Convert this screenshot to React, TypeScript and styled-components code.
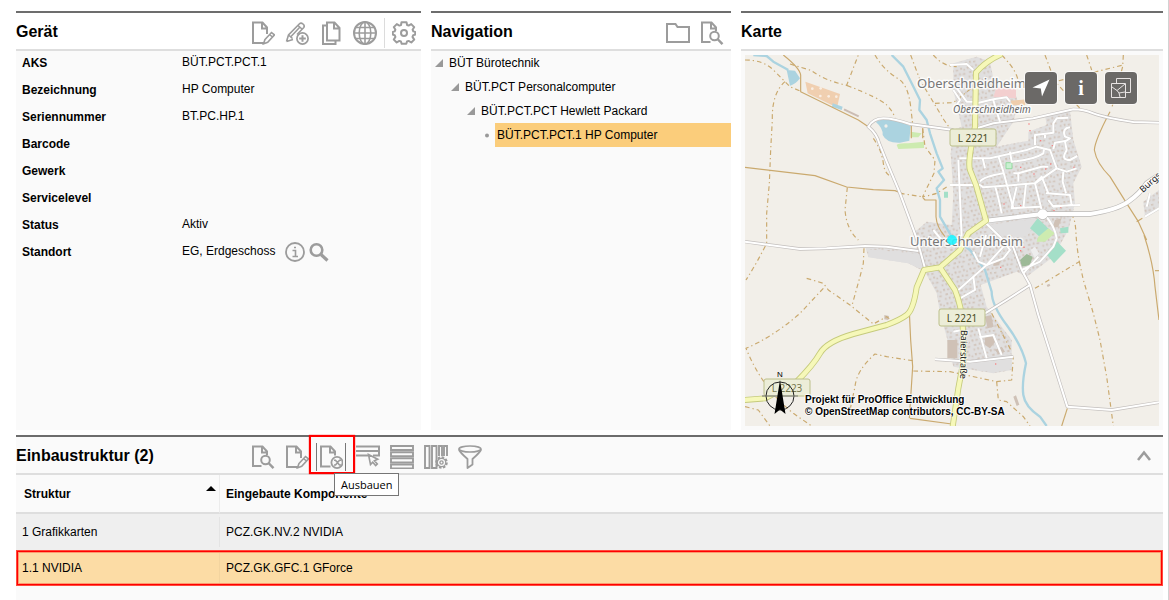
import React from "react";
import styled, { createGlobalStyle, css } from "styled-components";

const GlobalStyle = createGlobalStyle`
  *, *::before, *::after { box-sizing: border-box; }
  body {
    margin: 0;
    background: #fff;
    color: #000;
    font: 12px/24px "Liberation Sans", Arial, sans-serif;
  }
  h2, p, ul, dl, dd { margin: 0; padding: 0; }
  ul { list-style: none; }
`;

const Page = styled.main`
  display: flex;
  flex-direction: column;
  gap: 5px;
  min-height: 100vh;
  padding: 11px 5px 0 16px;
  border-right: 1px solid #d2d2d2;
`;

const TopRow = styled.div`
  display: grid;
  grid-template-columns: minmax(0, 405fr) minmax(0, 300fr) minmax(0, 422fr);
  gap: 10px;
`;

const Panel = styled.section<{ $grow?: boolean }>`
  display: flex;
  flex-direction: column;
  border-top: 2px solid #6d6d6d;
  background: #fafafa;
  ${(p) => p.$grow && "flex: 1;"}
`;

const PanelHeader = styled.header<{ $tinted?: boolean; $padRight?: number }>`
  display: flex;
  align-items: center;
  height: 38px;
  padding-top: 2px;
  padding-right: ${(p) => p.$padRight ?? 0}px;
  border-bottom: 2px solid #dedede;
  background: ${(p) => (p.$tinted ? "#fafafa" : "#fff")};
`;

const Title = styled.h2<{ $wide?: boolean }>`
  font-size: 16px;
  line-height: 34px;
  ${(p) => (p.$wide ? "flex: 0 0 235px;" : "flex: 1;")}
`;

const Toolbar = styled.div`
  display: flex;
  align-items: center;
  gap: 10px;
  padding-top: 2px;
`;

const IconButton = styled.button`
  display: block;
  position: relative;
  flex: none;
  padding: 0;
  border: 0;
  background: none;
  color: #9c9c9c;
  cursor: pointer;
  svg { display: block; }
`;

const HoveredButton = styled(IconButton)`
  margin-left: -3px;
  padding: 2px;
  border: solid #777;
  border-width: 0 1px;
`;

const Marker = styled.span`
  position: absolute;
  top: -8px;
  left: -8px;
  width: 46px;
  height: 39px;
  border: 2px solid #f00;
  box-shadow: 0 0 1px #f00;
`;

const Tooltip = styled.span`
  position: absolute;
  z-index: 2;
  top: 30px;
  left: 17px;
  padding: 0 6px;
  border: 1px solid #767676;
  background: #fff;
  color: #000;
  font: 11px/21px "Open Sans", "Noto Sans", sans-serif;
`;

const Divider = styled.span`
  width: 1px;
  height: 30px;
  margin: 0 -3px;
  background: #dcdcdc;
`;

const Spacer = styled.span`
  flex: 1;
`;

const Fields = styled.dl`
  display: flex;
  flex-direction: column;
  gap: 3px;
  padding-left: 6px;
`;

const Field = styled.div`
  display: grid;
  grid-template-columns: 160px 1fr;
  height: 24px;
  dt { font-weight: bold; }
  dd { display: flex; gap: 10px; line-height: 22px; }
`;

const Inline = styled.span`
  display: flex;
  gap: 4px;
`;

const TreeItem = styled.li<{ $level: number }>`
  display: flex;
  align-items: center;
  padding-left: ${(p) => 3 + p.$level * 16}px;
`;

const TreeLabel = styled.span<{ $selected?: boolean }>`
  flex: 1;
  padding-left: 2px;
  ${(p) => p.$selected && "background: #fbcd7b;"}
`;

const MapFrame = styled.div`
  position: relative;
  margin: 4px;
  height: 371px;
  overflow: hidden;
  > svg { display: block; width: 100%; height: 100%; }
`;

const MapTools = styled.div`
  position: absolute;
  top: 17px;
  right: 22px;
  display: flex;
  gap: 8px;
`;

const MapButton = styled.button`
  display: grid;
  place-items: center;
  width: 32px;
  height: 32px;
  padding: 0;
  border: 0;
  border-radius: 4px;
  background: #6b6967;
  box-shadow: 0 0 0 1px rgba(255, 255, 255, 0.7);
  color: #fff;
  font: bold 20px/20px "Liberation Serif", serif;
  cursor: pointer;
`;

const Credits = styled.p`
  position: absolute;
  left: 60px;
  bottom: 8px;
  font: bold 10px/12px "Liberation Sans", Arial, sans-serif;
  white-space: nowrap;
  text-shadow: 1px 0 1px #fff, -1px 0 1px #fff, 0 1px 1px #fff, 0 -1px 1px #fff;
`;

const Compass = styled.svg`
  && {
    position: absolute;
    left: 17px;
    bottom: 6px;
    width: 36px;
    height: 52px;
  }
`;

const Table = styled.table`
  width: 100%;
  border-collapse: separate;
  border-spacing: 0;
  table-layout: fixed;
  text-align: left;
  line-height: 16px;
`;

const HeadCell = styled.th<{ $first?: boolean }>`
  height: 39px;
  padding: 0 3px 0 ${(p) => (p.$first ? 8 : 6)}px;
  border-bottom: 2px solid #dedede;
  ${(p) => p.$first && "width: 204px; border-right: 1px solid #ececec;"}
`;

const SortButton = styled.button`
  display: flex;
  justify-content: space-between;
  width: 100%;
  padding: 0;
  border: 0;
  background: none;
  color: #000;
  font: inherit;
  text-align: left;
`;

const Row = styled.tr<{ $selected?: boolean }>`
  height: 36px;
  background: ${(p) => (p.$selected ? "#fcdca5" : "#efefef")};
  ${(p) =>
    p.$selected &&
    css`
      box-shadow: inset 0 0 0 1px #ff4a3c, inset 0 0 0 2px #f00, inset 0 0 0 3px #fd9a70;
    `}
  td { padding: 0 6px; }
  td:first-child {
    background: linear-gradient(${(p) => (p.$selected ? "#f3d49f, #f3d49f" : "#e4e4e4, #e4e4e4")}) right center / 1px 30px no-repeat;
  }
`;

function Icon({ children, size = 24 }: { children: React.ReactNode; size?: number }) {
  return (
    <svg width={size} height={size} viewBox={`0 0 ${size} ${size}`} fill="none" stroke="currentColor" strokeWidth="2" aria-hidden="true">
      {children}
    </svg>
  );
}

const DocEdit = () => (
  <Icon>
    <path d="M13 22H2V1.500h9.500L16 6.500V13M11 2v5.500h5" />
    <path d="M14 18.500l6.500-7 3 2.300-6.800 7.400-4.200 1.600zM18.500 13.500l3 2.500" strokeWidth="1.600" />
  </Icon>
);
const PencilPlus = () => (
  <Icon>
    <path d="M1.500 20.500l2-6.500L14.500 2.800q1.500-1.500 3.500.2t.8 3.500L12 13.500M1.500 20.500L8 18.500M3.500 14l4 3.500M13 4.500l4.500 4M6 15.500L15 6" strokeWidth="1.600" />
    <circle cx="17.500" cy="17.500" r="5.600" strokeWidth="1.700" />
    <path d="M17.500 14.200v6.600M14.200 17.500h6.600" />
  </Icon>
);
const Copy = () => (
  <Icon>
    <path d="M8 1.500h7.500L20.500 7v12.500H8zM15 2v5.500h5" />
    <path d="M7.500 4.500H4V23h12.500v-3" />
  </Icon>
);
const Globe = () => (
  <Icon>
    <circle cx="12" cy="12" r="11" />
    <ellipse cx="12" cy="12" rx="5.800" ry="11" strokeWidth="1.600" />
    <path d="M12 1v22M1 12h22M3 6.500h18M3 17.500h18" strokeWidth="1.600" />
  </Icon>
);
const Gear = () => (
  <Icon>
    <circle cx="12" cy="12" r="3" />
    <path
      strokeLinejoin="round"
      d="M9.500 1.200h5l.6 2.800 1.500.6 2.600-1.500 3 3-1.600 2.600.7 1.700 1.900.5v2.700l-2 .6-.7 1.700 1.700 2.700-2.900 2.900-2.700-1.600-1.600.6-.7 2.300H9.700l-.8-2.300-1.600-.6-2.600 1.600-2.900-2.900 1.600-2.700-.7-1.700-1.900-.6v-2.700l1.900-.5.7-1.700L1.800 6.100l3-3 2.600 1.500L9 4z"
    />
  </Icon>
);
const Folder = () => (
  <Icon>
    <path d="M1 21V3h8.500l2 3H23v15z" />
  </Icon>
);
const DocSearch = () => (
  <Icon>
    <path d="M10.500 21H2V1.500h9.500L16 6.500V10M11 2v5.500h5" />
    <circle cx="14.500" cy="15" r="4.300" />
    <path d="M17.500 18l5 5.200" strokeWidth="2.400" />
  </Icon>
);
const DocRemove = () => (
  <Icon>
    <path d="M11.500 21.500H2V1.500h9.500L16 6.500V10.500M11 2v5.500h5" />
    <circle cx="18" cy="17.500" r="5.600" strokeWidth="1.800" />
    <path d="M15 15.200h1.500L20.500 20H22M15 20h1.500l4-4.800H22" strokeWidth="1.600" />
  </Icon>
);
const RowsCursor = () => (
  <Icon>
    <path d="M0 1.500h23V6H0M0 10.500h12M17 10.500h6V6" />
    <path d="M12.500 9.500l2 10 2.200-2.400 3 3.400 1.600-1.500-2.900-3.300 3.300-1.500z" strokeWidth="1.600" />
  </Icon>
);
const Rows = () => (
  <Icon>
    <path d="M1 1h22v4H1zM1 7.200h22v4H1zM1 13.400h22v4H1zM1 19.500h22v4H1z" strokeWidth="1.900" />
  </Icon>
);
const ColumnsGear = () => (
  <Icon>
    <path d="M1 1h4.500v22H1zM8 1h4.500v22H8zM15 11V1h3v10M20 11V1h3v10" strokeWidth="1.900" />
    <circle cx="17.500" cy="17.500" r="5.200" strokeDasharray="2.500 1.500" strokeWidth="2.200" />
    <circle cx="17.500" cy="17.500" r="4.200" strokeWidth="1.200" />
    <circle cx="17.500" cy="17.500" r="1.600" strokeWidth="1.400" />
  </Icon>
);
const Funnel = () => (
  <Icon>
    <ellipse cx="12" cy="4" rx="11" ry="3" strokeWidth="1.700" />
    <path d="M1 4.500q.5 2.500 8.500 9.500v9l5-3.500V14Q22.500 7 23 4.500" strokeWidth="1.800" strokeLinejoin="round" />
  </Icon>
);
const Info = () => (
  <Icon size={20}>
    <circle cx="10" cy="10" r="9" strokeWidth="1.800" />
    <path d="M7.500 8.500h3v6M7.500 14.500h5.500M9 5.500h2" strokeWidth="1.600" />
  </Icon>
);
const Search = () => (
  <Icon size={20}>
    <circle cx="7.500" cy="8" r="5.800" strokeWidth="2.600" />
    <path d="M12 12.500l6.500 6" strokeWidth="3.200" />
  </Icon>
);

const fields: [string, string][] = [
  ["AKS", "BÜT.PCT.PCT.1"],
  ["Bezeichnung", "HP Computer"],
  ["Seriennummer", "BT.PC.HP.1"],
  ["Barcode", ""],
  ["Gewerk", ""],
  ["Servicelevel", ""],
  ["Status", "Aktiv"],
  ["Standort", "EG, Erdgeschoss"],
];

const tree = ["BÜT Bürotechnik", "BÜT.PCT Personalcomputer", "BÜT.PCT.PCT Hewlett Packard", "BÜT.PCT.PCT.1 HP Computer"];

const structure = [
  ["1 Grafikkarten", "PCZ.GK.NV.2 NVIDIA"],
  ["1.1 NVIDIA", "PCZ.GK.GFC.1 GForce"],
];

const tracksDashed = [
  "M15 30Q70 30 100 60T150 110L185 125",
  "M135 95Q95 130 97 210L92 300 88 400 80 490 80 580Q50 640 18 690",
  "M150 42L215 62Q250 90 320 106L355 15",
  "M320 106Q420 145 440 165T465 205",
  "M405 15Q430 60 480 90Q505 110 512 170T518 225",
  "M512 15L540 90 585 165 612 210 640 250",
  "M585 160L640 158 700 110",
  "M580 15Q610 50 650 50",
  "M548 235L555 290 585 330 582 370 548 440Q575 435 590 430L625 408",
  "M480 430L545 440",
  "M322 412L315 480Q320 540 355 570",
  "M400 265Q425 300 430 340T462 380",
  "M372 595L370 640 360 680 335 770",
  "M200 685L250 700 265 720 330 765 400 822 440 800 460 815",
  "M250 715L180 790Q100 860 18 895Q40 950 75 1000T160 1090L215 1128",
  "M518 932L440 920 405 912Q350 960 345 1010L330 1080",
  "M520 963L630 965 770 995 815 990 820 920",
  "M770 995L775 1050 800 1055 850 1100 870 1128",
  "M885 715L1018 635Q1010 590 1008 550T998 500",
  "M1018 635L1030 690 1060 790 1080 870 1100 980 1120 1128",
  "M785 15Q840 70 835 110",
  "M915 15L945 95 1020 175",
  "M860 140L945 95 1150 45",
  "M1040 15L1055 60",
  "M1150 15L1148 50 1115 175",
  "M15 1070L55 1080 90 1128",
  "M755 790L815 905",
];
const tracksSolid = [
  "M15 352L225 377 320 411 400 419 465 422 490 432",
  "M130 15Q180 55 182 75V125L355 210 385 230",
  "M548 442L555 450 588 450V500Q590 530 615 560",
  "M508 785L512 870 518 950 508 1105",
  "M1110 185Q1065 270 1063 300Q1070 340 1110 380L1160 460 1195 515 1220 570M1212 555Q1240 640 1245 710L1257 810",
  "M1190 515L1207 505",
  "M1245 662H1257",
  "M982 1075L965 1128",
  "M514 225V265M548 235V265",
  "M510 1105L635 1122",
];
const streets = [
  "M710 235L760 220 880 205 1000 178Q1030 178 1060 190T1180 216L1257 218",
  "M640 240L510 222Q460 205 430 205T385 230Q410 250 418 280L440 335 480 430 530 565 540 600 555 655",
  "M15 575L180 597 260 595 375 588 440 590 535 603",
  "M810 565L845 660 870 705 895 795 930 905 982 1070 1115 1080 1257 1057",
  "M870 705L800 750 735 790",
  "M585 928L690 935 820 920",
];
const lanes = [
  "M640 100L680 155H700M640 120L660 150 650 165M630 45L680 42 700 60",
  "M710 160L760 148 800 142 810 155M760 150L770 185 780 215",
  "M688 325L750 325 860 300 890 290 930 300 950 355 980 365 1010 355",
  "M885 285V255L940 248V220L950 205 985 203M915 255V265",
  "M990 232Q965 235 975 260L990 265 975 275 980 300 975 310Q965 330 990 330L1012 318M940 298L945 278 980 272",
  "M775 318L790 365 820 475M728 325L735 355M810 305L815 335Q880 330 910 310L912 298",
  "M720 395Q730 380 790 370M820 370H835L905 350 925 350M835 370L835 395",
  "M630 405H720L730 412 885 400 950 355M765 408Q775 440 785 490",
  "M885 400L908 492M858 402L850 475M830 410L815 475 900 470M885 400L905 380 925 430 920 430 990 435 995 465 940 470 925 450M970 365L968 395 978 430M940 468L1020 465",
  "M655 330L665 560M658 325H690",
  "M738 520L780 560 810 600 790 625 740 645",
  "M790 590L740 645 700 680 655 720M738 555L720 620M700 605L715 635 740 645",
  "M700 680L705 720 660 745",
  "M845 660L900 635 940 590 950 565Q945 530 915 495M850 670L895 620",
  "M715 835L740 925M718 862L760 855 785 915M640 845L665 840",
  "M1215 500L1257 475M1230 430L1220 470",
  "M580 540L605 570",
];
const residential = [
  "M640 40L710 20 750 35 765 110 820 110 835 160 820 215 770 290 865 272 865 245 920 225 915 195 990 182 1000 270 1025 350 1000 400 1005 460 985 540 940 620 860 680 830 665 722 705 740 770 815 870 815 960 760 970 640 950 620 860 600 790 590 730 555 665 505 640 385 620 375 588 530 595 520 550 560 515 635 525 640 430 632 310 640 240 665 230 640 120z",
  "M1210 455L1257 420V470L1215 500z",
];

function TownMap() {
  return (
    <svg viewBox="0 0 414 371" preserveAspectRatio="xMidYMid slice" role="img" aria-label="Karte Unterschneidheim">
      <defs>
        <pattern id="houses" width="46" height="42" patternUnits="userSpaceOnUse" patternTransform="rotate(-14)">
          <g fill="#d2c5bc">
            <rect x="3" y="3" width="6" height="7" />
            <rect x="15" y="5" width="7" height="5" />
            <rect x="29" y="2" width="6" height="6" />
            <rect x="38" y="8" width="5" height="5" />
            <rect x="7" y="18" width="7" height="6" />
            <rect x="22" y="17" width="5" height="7" />
            <rect x="33" y="20" width="8" height="5" />
            <rect x="2" y="31" width="5" height="6" />
            <rect x="14" y="30" width="5" height="7" />
            <rect x="26" y="33" width="7" height="5" />
          </g>
        </pattern>
      </defs>
      <rect width="414" height="371" fill="#f2efe9" />
      <g transform="scale(.33333) translate(-15 -15)" fill="none" strokeLinejoin="round">
        {residential.map((d) => (
          <g key={d}>
            <path d={d} fill="#e0dfdf" />
            <path d={d} fill="url(#houses)" />
          </g>
        ))}
        <path d="M385 598L540 612 550 660 505 640 385 622z M740 525L840 512 905 505 880 530 860 560 790 555z M745 920L815 912 815 958 760 968 650 945z" fill="#e0dfdf" />
        <path d="M196 95L300 132 293 165H275L203 130z" fill="#f0cfb0" />
        <g fill="#f9eee3">
          <circle cx="217" cy="116" r="4" /><circle cx="242" cy="115" r="4" /><circle cx="241" cy="138" r="4" /><circle cx="266" cy="139" r="4" /><circle cx="289" cy="140" r="4" />
        </g>
        <path d="M770 110L828 118 828 145 760 142z" fill="#f3cfcf" />
        <path d="M812 152L860 148 855 166 815 165z" fill="#efcdac" />
        <path d="M870 535L893 505 935 545 910 570z M917 610L950 573 978 602 942 640z M960 535L985 530 985 548 962 550z M612 425h12v18h-12z" fill="#a4dfc8" />
        <path d="M895 560L925 535 945 550 915 575 890 575z M512 245L545 250 535 262 512 262z M470 285Q475 278 505 280L552 275V294L475 297z" fill="#cdebb0" />
        <path d="M840 630L860 612 878 620 870 645 845 650z" fill="#9dba98" />
        <path d="M798 338h18v18h-18z" fill="#c8f0d0" stroke="#7ad48d" strokeWidth="2" />
        <path d="M872 600L885 590 897 610 885 625z" fill="#eee" />
        <path d="M140 60L165 62 180 85Q165 105 150 107Z M407 215L430 207 460 207 512 228 508 272 480 278Q440 280 428 255Q430 235 407 215z M278 160L308 170 305 180 276 170z" fill="#abd3e0" />
        <circle cx="438" cy="228" r="5" fill="#f2efe9" />
        <path d="M312 178L356 199" stroke="#cbbcb3" strokeWidth="6" />
        <g fill="#cfc1b6">
          <path d="M622 870h30v55h-30zM735 860l25-5 10 15-20 25-15-10zM765 900l20-10 10 15-20 8zM735 800l18-5 8 35-18 5zM945 510l20-5-10 25-18 5zM820 1040l8-4 10 28-8 4zM433 795l14 3-2 12-12-2zM920 705l8-4 3 6-8 4zM760 638l20-4-2 12-18 2z" />
        </g>
        <g fill="#f58080">
          {[[865, 220], [868, 240], [900, 270], [935, 285], [1000, 350], [880, 370], [840, 350], [820, 470], [840, 465], [860, 472], [940, 480], [960, 470], [790, 460], [840, 600], [780, 650], [660, 580], [690, 600], [765, 940], [850, 590], [930, 340], [915, 355]].map(([x, y]) => (
            <rect key={`${x}-${y}`} x={x} y={y} width="4" height="4" />
          ))}
        </g>
        <g stroke="#abd3e0" strokeWidth="7">
          <path d="M40 15L80 18 100 35 145 60" />
          <path d="M455 15L490 50 515 100 540 150 538 180 560 210 570 250 590 310 608 355 595 365 612 390 590 415 600 450V500L635 560 690 600 735 660 755 725Q755 765 800 825T858 940Q845 1000 850 1035T900 1100L920 1128" />
        </g>
        <g stroke="#caa96e" strokeWidth="3.500">
          {tracksDashed.map((d) => <path key={d} d={d} strokeDasharray="14 9 4 9" />)}
          {tracksSolid.map((d) => <path key={d} d={d} />)}
        </g>
        {streets.map((d) => <path key={d} d={d} stroke="#c3bfbd" strokeWidth="10" />)}
        {lanes.map((d) => <path key={d} d={d} stroke="#d0cecc" strokeWidth="8" />)}
        {streets.map((d) => <path key={d} d={d} stroke="#fff" strokeWidth="6" />)}
        {lanes.map((d) => <path key={d} d={d} stroke="#fff" strokeWidth="6" />)}
        {[["#bcbab8", 16], ["#fff", 12]].map(([c, w]) => (
          <g key={c} stroke={c as string} strokeWidth={w}>
            <path d="M738 512L908 492 1050 492Q1130 480 1165 455T1220 400L1257 375" />
            <circle cx="908" cy="493" r="9" fill="#fff" />
          </g>
        ))}
        {[["#c5ca7c", 18], ["#f6f8b9", 13]].map(([c, w]) => (
          <g key={c} stroke={c as string} strokeWidth={w}>
            <path d="M785 12Q735 35 708 68L705 230 692 300Q685 345 690 360L708 405 738 512 685 550 660 600 600 652 552 660 530 712Q520 780 500 795T440 825L340 852Q260 875 240 910T170 995L75 1045 12 1050" />
            <path d="M600 652L645 720Q665 770 668 825T670 935L655 1015 638 1130" />
          </g>
        ))}
      </g>
      <g fontFamily='"Noto Sans", sans-serif'>
        <g paintOrder="stroke" stroke="#fff" strokeOpacity=".8" strokeWidth="3" strokeLinejoin="round" fill="#777">
          <text x="172" y="33" fontSize="13">Oberschneidheim</text>
          <text x="208" y="58" fontSize="10" fontStyle="italic" fill="#666">Oberschneidheim</text>
          <text x="165" y="191" fontSize="13">Unterschneidheim</text>
        </g>
        <circle cx="207" cy="185" r="5" fill="#1ff4ff" opacity=".9" />
        <g fill="#ecedd8" stroke="#bcc08a">
          <rect x="205" y="74" width="46" height="17" rx="2" />
          <rect x="194" y="254" width="46" height="17" rx="2" />
          <rect x="19" y="324" width="46" height="17" rx="2" />
        </g>
        <g fontSize="10" fill="#46481c" textAnchor="middle">
          <text x="228" y="87">L 2221</text>
          <text x="217" y="267">L 2221</text>
          <text x="42" y="337" fill="#777950">L 2223</text>
        </g>
        <g fontSize="9" fill="#222" paintOrder="stroke" stroke="#fff" strokeOpacity=".6" strokeWidth="2">
          <text transform="translate(216 275) rotate(91)">Baierstraße</text>
          <text transform="translate(398 138) rotate(-42)">Burgs</text>
        </g>
      </g>
    </svg>
  );
}

export default function App() {
  return (
    <>
      <GlobalStyle />
      <Page>
        <TopRow>
          <Panel>
            <PanelHeader $padRight={5}>
              <Title>Gerät</Title>
              <Toolbar>
                <IconButton aria-label="Bearbeiten"><DocEdit /></IconButton>
                <IconButton aria-label="Neu"><PencilPlus /></IconButton>
                <IconButton aria-label="Kopieren"><Copy /></IconButton>
                <IconButton aria-label="Web"><Globe /></IconButton>
                <Divider />
                <IconButton aria-label="Einstellungen"><Gear /></IconButton>
              </Toolbar>
            </PanelHeader>
            <Fields>
              {fields.map(([label, value]) => (
                <Field key={label}>
                  <dt>{label}</dt>
                  <dd>
                    {value}
                    {label === "Standort" && (
                      <Inline>
                        <IconButton aria-label="Info"><Info /></IconButton>
                        <IconButton aria-label="Suchen"><Search /></IconButton>
                      </Inline>
                    )}
                  </dd>
                </Field>
              ))}
            </Fields>
          </Panel>

          <Panel>
            <PanelHeader $padRight={7}>
              <Title>Navigation</Title>
              <Toolbar>
                <IconButton aria-label="Ordner"><Folder /></IconButton>
                <IconButton aria-label="Vorschau"><DocSearch /></IconButton>
              </Toolbar>
            </PanelHeader>
            <ul>
              {tree.map((label, level) => (
                <TreeItem key={label} $level={level}>
                  <svg width="13" height="10" viewBox="0 0 13 10" fill="#999" aria-hidden="true">
                    {level < 3 ? <path d="M9 1v8H1z" /> : <circle cx="5" cy="5.500" r="2" />}
                  </svg>
                  <TreeLabel $selected={level === 3}>{label}</TreeLabel>
                </TreeItem>
              ))}
            </ul>
          </Panel>

          <Panel>
            <PanelHeader>
              <Title>Karte</Title>
            </PanelHeader>
            <MapFrame>
              <TownMap />
              <MapTools>
                <MapButton aria-label="Position">
                  <svg width="20" height="20" viewBox="0 0 20 20" fill="#fff"><path d="M18.500 1.500L11 18.500 9.800 10.500 1.500 9.500z" /></svg>
                </MapButton>
                <MapButton>i</MapButton>
                <MapButton aria-label="Ebenen">
                  <svg width="20" height="20" viewBox="0 0 20 20" fill="none" stroke="#e8e4e4"><path d="M.5 5.500h14v14H.5zM5.500 5.500v-5h14v14h-5M1 9l5 3.500L14 6M6 12.500l2 2.500 1 4M8 15l6-1" /></svg>
                </MapButton>
              </MapTools>
              <Compass viewBox="0 0 36 52" aria-hidden="true">
                <text x="18" y="9" textAnchor="middle" fontSize="8" fontFamily="Liberation Sans, sans-serif">N</text>
                <circle cx="18" cy="28" r="14" fill="none" stroke="#222" />
                <path d="M0 28H36" stroke="#777" strokeWidth="1" />
                <path d="M18 12L23.500 46 18 41.500 12.500 46z" />
              </Compass>
              <Credits>
                Projekt für ProOffice Entwicklung
                <br />© OpenStreetMap contributors, CC-BY-SA
              </Credits>
            </MapFrame>
          </Panel>
        </TopRow>

        <Panel $grow>
          <PanelHeader $tinted $padRight={12}>
            <Title $wide>Einbaustruktur (2)</Title>
            <Toolbar>
              <IconButton aria-label="Vorschau"><DocSearch /></IconButton>
              <IconButton aria-label="Bearbeiten"><DocEdit /></IconButton>
              <HoveredButton aria-labelledby="remove-tip">
                <DocRemove />
                <Marker />
                <Tooltip id="remove-tip" role="tooltip">Ausbauen</Tooltip>
              </HoveredButton>
              <IconButton aria-label="Auswahl"><RowsCursor /></IconButton>
              <IconButton aria-label="Zeilen"><Rows /></IconButton>
              <IconButton aria-label="Spalten"><ColumnsGear /></IconButton>
              <IconButton aria-label="Filter"><Funnel /></IconButton>
            </Toolbar>
            <Spacer />
            <IconButton aria-label="Einklappen">
              <svg width="14" height="12" viewBox="0 0 14 12" fill="none" stroke="currentColor" strokeWidth="2.600"><path d="M1 10L7 2.500l6 7.500" /></svg>
            </IconButton>
          </PanelHeader>
          <Table>
            <thead>
              <tr>
                <HeadCell $first aria-sort="ascending">
                  <SortButton>
                    Struktur
                    <svg width="10" height="5" viewBox="0 0 10 5" aria-hidden="true"><path d="M0 5L5 0l5 5z" /></svg>
                  </SortButton>
                </HeadCell>
                <HeadCell>Eingebaute Komponente</HeadCell>
              </tr>
            </thead>
            <tbody>
              {structure.map(([name, part], i) => (
                <Row key={name} $selected={i === 1}>
                  <td>{name}</td>
                  <td>{part}</td>
                </Row>
              ))}
            </tbody>
          </Table>
        </Panel>
      </Page>
    </>
  );
}
